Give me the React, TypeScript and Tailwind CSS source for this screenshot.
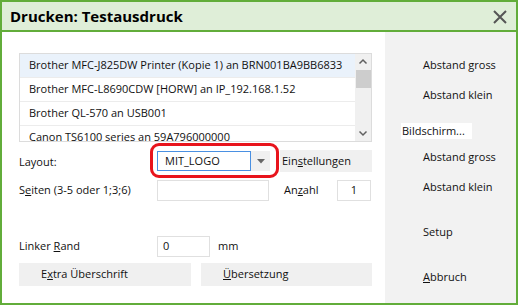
export default function App() {
  const printers = [
    "Brother MFC-J825DW Printer (Kopie 1) an BRN001BA9BB6833",
    "Brother MFC-L8690CDW [HORW] an IP_192.168.1.52",
    "Brother QL-570 an USB001",
    "Canon TS6100 series an 59A796000000",
  ];
  return (
    <div className="w-[518px] h-[305px] flex flex-col border-2 border-[#62ad3a] bg-white text-[11px] text-[#111] font-['Open_Sans',sans-serif] overflow-hidden">
      {/* Title bar */}
      <div className="h-[30px] shrink-0 flex items-center justify-between pl-[8px] pr-[8px] bg-[#dfeed8] border-b-2 border-[#62ad3a]">
        <span className="text-[15px] font-bold text-black">Drucken: Testausdruck</span>
        <svg width="16" height="16" viewBox="0 0 16 16" className="mt-[1px]">
          <path d="M2 2 L14 14 M14 2 L2 14" stroke="#555" strokeWidth="2" />
        </svg>
      </div>

      <div className="flex flex-1 min-h-0">
        {/* Left area */}
        <div className="w-[383px] shrink-0 pl-[17px] pt-[21px] flex flex-col relative">
          <div className="w-[353px] h-[89px] border border-[#dcdcdc] flex overflow-hidden">
            <div className="flex-1 flex flex-col">
              {printers.map((p, i) => (
                <div
                  key={p}
                  className={
                    i === 0
                      ? "h-[24px] shrink-0 flex items-center pl-[9px] bg-[#eaf2fb] border-b border-[#ececec] whitespace-nowrap"
                      : "h-[24px] shrink-0 flex items-center pl-[9px] border-b border-[#ececec] whitespace-nowrap"
                  }
                >
                  {p}
                </div>
              ))}
            </div>
            <div className="w-[16px] bg-[#f0f0f0] flex flex-col items-center">
              <svg width="16" height="16" viewBox="0 0 16 16">
                <path d="M4.5 9.5 L8 6 L11.5 9.5" stroke="#606060" strokeWidth="1.5" fill="none" />
              </svg>
              <div className="w-[15px] h-[18px] bg-[#cdcdcd]" />
              <div className="flex-1" />
              <svg width="16" height="16" viewBox="0 0 16 16">
                <path d="M4.5 6.5 L8 10 L11.5 6.5" stroke="#606060" strokeWidth="1.5" fill="none" />
              </svg>
            </div>
          </div>

          {/* Layout row */}
          <div className="flex items-center mt-[8px] h-[22px]">
            <span className="w-[138px] shrink-0 mt-[2px]">Layout:</span>
            <div className="flex h-[20px] w-[113px]">
              <div className="w-[94px] border border-[#4a90e2] flex items-center pl-[7px]">MIT_LOGO</div>
              <div className="flex-1 bg-[#f0f0f0] flex items-center justify-center">
                <svg width="8" height="5" viewBox="0 0 8 5">
                  <path d="M0 0 L8 0 L4 4.5 Z" fill="#666" />
                </svg>
              </div>
            </div>
            <div className="ml-[10px] w-[92px] h-[22px] bg-[#f0f0f0] flex items-center pl-[2px]">
              Ein<span className="underline">s</span>tellungen
            </div>
          </div>

          {/* Seiten row */}
          <div className="flex items-center mt-[8px] h-[21px]">
            <span className="w-[138px] shrink-0">
              S<span className="underline">e</span>iten (3-5 oder 1;3;6)
            </span>
            <div className="w-[112px] h-[21px] border border-[#e0e0e0]" />
            <span className="ml-[15px] w-[53px]">
              An<span className="underline">z</span>ahl
            </span>
            <div className="w-[34px] h-[21px] border border-[#e0e0e0] flex items-center justify-center">1</div>
          </div>

          {/* Linker Rand row */}
          <div className="flex items-center mt-[35px] h-[21px]">
            <span className="w-[138px] shrink-0">
              Linker <span className="underline">R</span>and
            </span>
            <div className="w-[53px] h-[21px] border border-[#e0e0e0] flex items-center pl-[5px]">0</div>
            <span className="ml-[8px]">mm</span>
          </div>

          {/* Buttons */}
          <div className="flex mt-[6px] gap-[10px]">
            <div className="w-[172px] h-[23px] bg-[#f0f0f0] flex items-center pl-[22px]">
              E<span className="underline">x</span>tra Überschrift
            </div>
            <div className="w-[171px] h-[23px] bg-[#f0f0f0] flex items-center pl-[22px]">
              <span className="underline">Ü</span>bersetzung
            </div>
          </div>

          {/* Red highlight around layout dropdown */}
          <div className="absolute left-[148px] top-[111px] w-[129px] h-[35px] border-[3px] border-[#e8141c] rounded-[9px]" />
        </div>

        {/* Right panel */}
        <div className="flex-1 bg-[#f2f2f2] flex flex-col pl-[38px] pt-[24px]">
          <span className="h-[18px] leading-[18px]">Abstand gross</span>
          <span className="h-[18px] leading-[18px] mt-[12px]">Abstand klein</span>
          <span className="h-[16px] leading-[16px] mt-[19px] -ml-[22px] w-[71px] bg-white pl-[1px]">Bildschirm...</span>
          <span className="h-[18px] leading-[18px] mt-[9px]">Abstand gross</span>
          <span className="h-[18px] leading-[18px] mt-[12px]">Abstand klein</span>
          <span className="h-[18px] leading-[18px] mt-[27px]">Setup</span>
          <span className="h-[18px] leading-[18px] mt-[27px]">
            <span className="underline">A</span>bbruch
          </span>
        </div>
      </div>
    </div>
  );
}
